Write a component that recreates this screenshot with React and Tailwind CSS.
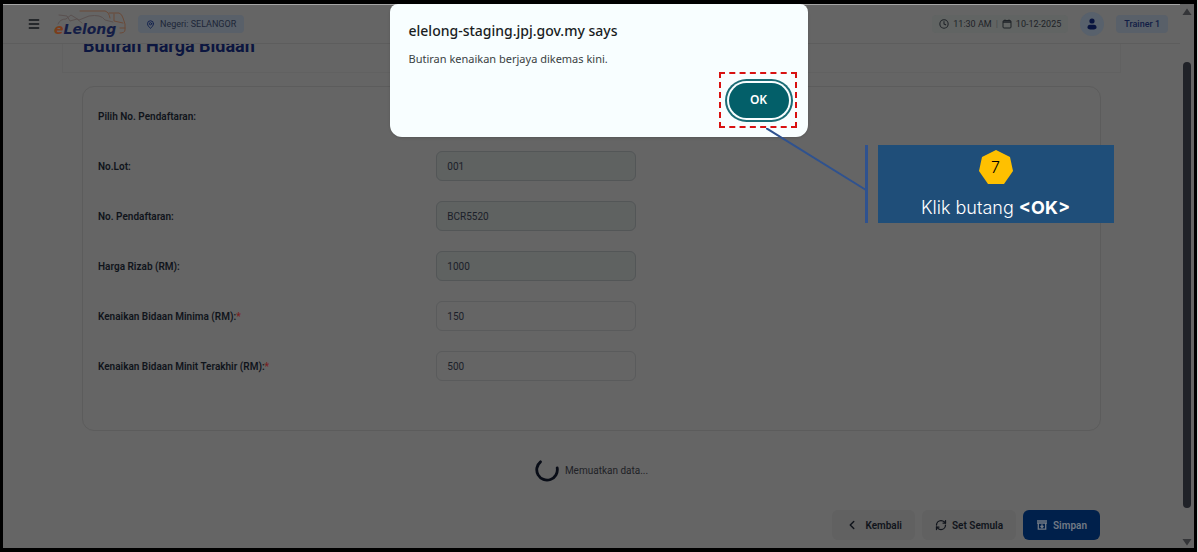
import { Menu, MapPin, Clock, ChevronLeft, RefreshCw } from 'lucide-react';

const fields = [
  { id: 'noLot', label: 'No.Lot:', value: '001', readOnly: true },
  { id: 'noPendaftaran', label: 'No. Pendaftaran:', value: 'BCR5520', readOnly: true },
  { id: 'hargaRizab', label: 'Harga Rizab (RM):', value: '1000', readOnly: true },
  { id: 'kenaikanMinima', label: 'Kenaikan Bidaan Minima (RM):', value: '150', required: true },
  { id: 'kenaikanAkhir', label: 'Kenaikan Bidaan Minit Terakhir (RM):', value: '500', required: true },
];

function Logo() {
  return (
    <svg viewBox="0 0 73 32" className="h-8 w-[73px]" role="img" aria-label="eLelong">
      <g fill="none" stroke="#6b4a38" strokeWidth="1" strokeLinecap="round" strokeLinejoin="round">
        <path d="M27 3H52Q56 4 57 10" />
        <path d="M56 5H66Q69 6 70 10L72 16V22Q72 25 67 25" />
        <path d="M61 6V13L70 15" />
        <path d="M67 20H72" />
        <path stroke="#5a5150" d="M5 16Q7 11 13 11L18 7L26 12L36 8Q48 6 52 12L60 14" />
        <path stroke="#5a5150" d="M6 7L14 8L17 13L24 11L29 15" />
      </g>
      <text x="1" y="26" fontSize="14" fontStyle="italic" fontWeight="700" fontFamily="DejaVu Sans, sans-serif" fill="#141d45">
        <tspan fill="#7c3d1b">e</tspan>Lelong
      </text>
    </svg>
  );
}

function Header() {
  return (
    <header className="relative z-10 flex h-[39px] items-center justify-between border-b border-[#5d5d5d] bg-[#656565] pr-3 pl-6 text-[9px]">
      <div className="flex items-center">
        <button type="button" aria-label="Menu" className="mr-3 text-[#111418]">
          <Menu size={14} strokeWidth={2.5} />
        </button>
        <Logo />
        <span className="ml-3 flex h-[18px] items-center gap-[5px] rounded bg-[#596069] px-2 text-[#1d2637]">
          <MapPin size={9} strokeWidth={2.5} className="text-[#0f1f4d]" />
          Negeri: SELANGOR
        </span>
      </div>
      <div className="flex items-center gap-3">
        <div className="flex h-[18px] items-center gap-1 rounded bg-[#616463] px-[7px] text-[#1e2227]">
          <Clock size={10} strokeWidth={2.5} />
          <span>11:30 AM</span>
          <span className="text-[#474a4d]">|</span>
          <svg viewBox="0 0 10 10" className="size-2.5" fill="none" stroke="currentColor">
            <rect x="1" y="1.5" width="8" height="7.5" rx="1" />
            <path strokeWidth="1.5" d="M1 3H9" />
            <path d="M3 0.5V2M7 0.5V2" />
          </svg>
          <span>10-12-2025</span>
        </div>
        <button type="button" aria-label="Profil" className="flex size-6 items-center justify-center rounded-full bg-[#58616c]">
          <svg viewBox="0 0 10 12" className="h-3 w-2.5" fill="#08143f">
            <circle cx="5" cy="3" r="2.6" />
            <path d="M0.5 9.5Q0.5 6.8 3 6.8H7Q9.5 6.8 9.5 9.5Q9.5 11.5 5 11.5Q0.5 11.5 0.5 9.5Z" />
          </svg>
        </button>
        <span className="flex h-[18px] items-center rounded bg-[#596069] px-2 font-medium text-[#111d45]">Trainer 1</span>
      </div>
    </header>
  );
}

function BidForm() {
  return (
    <form className="mx-[79px] mt-[13px] flex flex-col gap-5 rounded-xl border border-[#5c5c5c] px-[15px] pt-[14px] pb-[49px]">
      <div className="flex h-[30px] items-center font-semibold">Pilih No. Pendaftaran:</div>
      {fields.map((field) => (
        <div key={field.id} className="grid grid-cols-3 items-center gap-x-7">
          <label htmlFor={field.id} className="font-semibold">
            {field.label}
            {field.required && <span className="text-[#78201f]">*</span>}
          </label>
          <input
            id={field.id}
            defaultValue={field.value}
            readOnly={field.readOnly}
            className="h-[30px] w-[200px] rounded-md border border-[#5a5b5c] px-2.5 text-[#1b2029] outline-none read-only:border-[#535657] read-only:bg-[#5f6261]"
          />
        </div>
      ))}
    </form>
  );
}

function Actions() {
  return (
    <div className="mx-20 mt-7 flex justify-end gap-[7px] font-semibold">
      <button type="button" className="flex h-[30px] items-center gap-1.5 rounded-md bg-[#616161] px-[13px]">
        <ChevronLeft size={14} strokeWidth={2.5} />
        Kembali
      </button>
      <button type="button" className="flex h-[30px] items-center gap-[5px] rounded-md bg-[#616161] px-[13px]">
        <RefreshCw size={12} strokeWidth={2.5} />
        Set Semula
      </button>
      <button type="submit" className="flex h-[30px] items-center gap-[5px] rounded-md bg-[#00204b] px-[13px] text-[#727a85]">
        <svg viewBox="0 0 12 12" className="size-3" fill="none" stroke="currentColor" strokeWidth="1.3">
          <path d="M1 2H11M1 4H11M2.3 4V10.2H9.7V4M6 5.2V8.5M4.5 7L6 8.5L7.5 7" />
        </svg>
        Simpan
      </button>
    </div>
  );
}

function Scrollbar() {
  return (
    <div className="flex w-[14px] flex-col items-center pt-1 pb-0.5" aria-hidden="true">
      <svg viewBox="0 0 10 8" className="h-2 w-2.5 shrink-0" fill="#343538"><path d="M5 0.5L9.5 7H0.5Z" /></svg>
      <div className="mt-[46px] mb-[30px] w-2 grow rounded-full bg-[#202228]" />
      <svg viewBox="0 0 10 8" className="h-2 w-2.5 shrink-0" fill="#343538"><path d="M0.5 1H9.5L5 7.5Z" /></svg>
    </div>
  );
}

function StepCallout() {
  return (
    <>
      <svg viewBox="0 0 102 64" className="absolute top-[124px] left-[376px] h-16 w-[102px]" stroke="#2f528f" strokeWidth="2">
        <path d="M0 0L100 62" />
      </svg>
      <div className="absolute top-[141px] left-[475px] flex h-[78px] w-[249px] gap-[10px] font-['Inter',sans-serif]">
        <div className="w-[3px] bg-[#2f528f]" />
        <div className="flex grow flex-col items-center bg-[#1f4e79] pt-[5px] text-white">
          <div className="relative flex size-[34px] items-center justify-center text-base font-light text-black">
            <svg viewBox="0 0 34 34" className="absolute inset-0" fill="#ffc000">
              <path d="M17 0L31 7L34 21L25 34H9L0 21L3 7Z" />
            </svg>
            <span className="relative">7</span>
          </div>
          <p className="mt-3 text-lg leading-6 font-light">
            Klik butang <strong className="font-bold">&lt;OK&gt;</strong>
          </p>
        </div>
      </div>
    </>
  );
}

function AlertDialog() {
  return (
    <div
      role="alertdialog"
      aria-labelledby="alertTitle"
      className="absolute top-0 left-1/2 z-20 h-[133px] w-[418px] -translate-x-1/2 rounded-t-lg rounded-b-xl bg-[#f8feff] pt-[17px] pl-[19px] font-['Noto_Sans',sans-serif] shadow"
    >
      <h2 id="alertTitle" className="text-sm leading-5 font-medium text-[#1a1d1e]">elelong-staging.jpj.gov.my says</h2>
      <p className="mt-2 text-[11px] leading-5 text-[#3a4142]">Butiran kenaikan berjaya dikemas kini.</p>
      <div className="absolute top-[68px] right-[11px] flex h-14 w-[78px] items-center justify-center border-2 border-dashed border-[#d81212] pl-0.5">
        <button type="button" className="h-[35px] w-[60px] rounded-full bg-[#035f69] text-xs font-semibold text-white ring-2 ring-[#1a6c75] ring-offset-2 ring-offset-[#f8feff]">
          OK
        </button>
      </div>
      <StepCallout />
    </div>
  );
}

export default function App() {
  return (
    <div className="bg-[#d9d9d9] pr-px">
      <div className="relative flex min-h-screen border-x-[3px] border-y-4 border-black bg-[#656565] font-['Roboto',sans-serif] text-[10px] leading-[15px] text-[#10141b]">
        <div className="flex grow flex-col border-t border-[#a5a5a5]">
          <Header />
          <section className="mx-[59px] flex h-[29px] items-end border-x border-b border-[#616161] px-5 pb-4">
            <h1 className="text-lg leading-5 font-bold text-[#0c1640]">Butiran Harga Bidaan</h1>
          </section>
          <BidForm />
          <div role="status" className="mt-[27px] flex h-6 items-center justify-center gap-1.5 text-[#1f2226]">
            <svg viewBox="0 0 24 24" className="size-6" fill="none" stroke="#090d17" strokeWidth="2.8" strokeLinecap="round">
              <path d="M5.5 3.8A10.3 10.3 0 1 0 22.2 10" />
            </svg>
            Memuatkan data...
          </div>
          <Actions />
        </div>
        <Scrollbar />
        <AlertDialog />
      </div>
    </div>
  );
}
